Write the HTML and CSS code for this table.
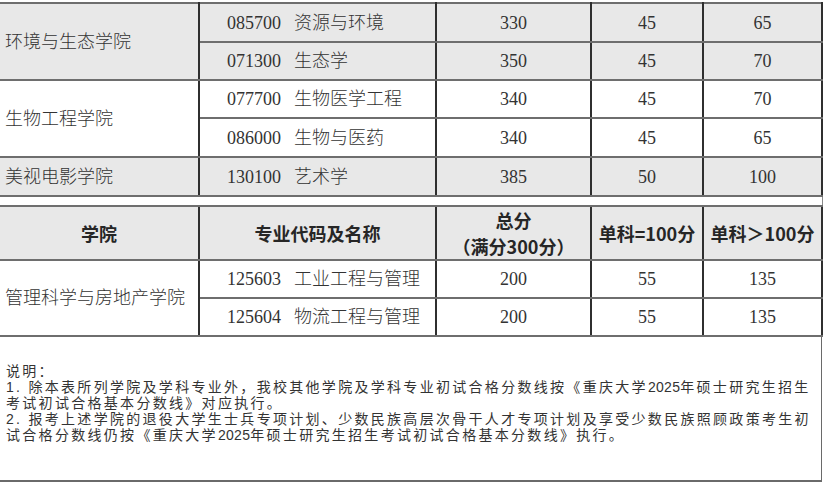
FILE: index.html
```html
<!DOCTYPE html>
<html lang="zh-CN">
<head>
<meta charset="utf-8">
<title>分数线</title>
<link rel="stylesheet" href="styles.css">
</head>
<body>
<div class="page">
  <table class="grid">
    <colgroup>
      <col class="c1"><col class="c2"><col class="c3"><col class="c4"><col class="c5">
    </colgroup>
    <tbody>
      <tr class="gray r39">
        <td rowspan="2" class="college">环境与生态学院</td>
        <td class="major"><span class="code">085700</span>资源与环境</td>
        <td>330</td><td>45</td><td>65</td>
      </tr>
      <tr class="gray r38">
        <td class="major"><span class="code">071300</span>生态学</td>
        <td>350</td><td>45</td><td>70</td>
      </tr>
      <tr class="r38">
        <td rowspan="2" class="college">生物工程学院</td>
        <td class="major"><span class="code">077700</span>生物医学工程</td>
        <td>340</td><td>45</td><td>70</td>
      </tr>
      <tr class="r39">
        <td class="major"><span class="code">086000</span>生物与医药</td>
        <td>340</td><td>45</td><td>65</td>
      </tr>
      <tr class="gray r39">
        <td class="college">美视电影学院</td>
        <td class="major"><span class="code">130100</span>艺术学</td>
        <td>385</td><td>50</td><td>100</td>
      </tr>
      <tr class="spacer">
        <td colspan="5"></td>
      </tr>
      <tr class="head">
        <th>学院</th>
        <th>专业代码及名称</th>
        <th>总分<br>（满分300分）</th>
        <th>单科=100分</th>
        <th>单科＞100分</th>
      </tr>
      <tr class="r38">
        <td rowspan="2" class="college">管理科学与房地产学院</td>
        <td class="major"><span class="code">125603</span>工业工程与管理</td>
        <td>200</td><td>55</td><td>135</td>
      </tr>
      <tr class="r38">
        <td class="major"><span class="code">125604</span>物流工程与管理</td>
        <td>200</td><td>55</td><td>135</td>
      </tr>
    </tbody>
  </table>
  <div class="notes">
    <div class="line">说明：</div>
    <div class="line">1. 除本表所列学院及学科专业外，我校其他学院及学科专业初试合格分数线按《重庆大学<span class="num">2025</span>年硕士研究生招生</div>
    <div class="line">考试初试合格基本分数线》对应执行。</div>
    <div class="line">2. 报考上述学院的退役大学生士兵专项计划、少数民族高层次骨干人才专项计划及享受少数民族照顾政策考生初</div>
    <div class="line">试合格分数线仍按《重庆大学<span class="num">2025</span>年硕士研究生招生考试初试合格基本分数线》执行。</div>
  </div>
</div>
</body>
</html>
```

FILE: styles.css
```css
html, body {
  margin: 0;
  padding: 0;
  background: #ffffff;
}

.page {
  width: 822px;
  padding-top: 2px;
}

.grid {
  width: 822px;
  border-collapse: collapse;
  table-layout: fixed;
  font-family: "Liberation Serif", "Noto Sans CJK SC", serif;
  font-size: 18px;
  color: #333333;
}

.c1 { width: 199px; }
.c2 { width: 237px; }
.c3 { width: 155px; }
.c4 { width: 112px; }
.c5 { width: 119px; }

.grid td,
.grid th {
  padding: 0;
  text-align: center;
  vertical-align: middle;
  border-top: 2px solid #6e6e6e;
  border-bottom: 2px solid #6e6e6e;
  border-left: 2px solid #2f2f2f;
  border-right: 2px solid #2f2f2f;
  line-height: 22px;
}

.grid td {
  font-weight: 300;
}

.grid tr > :first-child {
  border-left: none;
}

.grid td.college {
  text-align: left;
  padding-left: 5px;
}

.grid td.major {
  text-align: left;
  padding-left: 27px;
}

.code {
  margin-right: 13px;
}

.gray td {
  background: #e8e8e8;
}

.r39 { height: 39px; }
.r38 { height: 38px; }

.spacer td {
  height: 8px;
  background: #ffffff;
  border-left: none;
  border-right: 1px solid #8a8a8a;
}

.head { height: 49px; }

.head th {
  background: #e8e8e8;
  font-family: "Noto Sans CJK SC", sans-serif;
  font-weight: 700;
  color: #262626;
  line-height: 26px;
  font-size: 18px;
}

.notes {
  border-right: 1px solid #6a6a6a;
  border-bottom: 2px solid #6a6a6a;
  padding: 26px 0 37px 6px;
  font-family: "Liberation Sans", "Noto Sans CJK SC", sans-serif;
  font-size: 14px;
  line-height: 16px;
  letter-spacing: 2.3px;
  color: #333333;
}

.num {
  letter-spacing: 0.3px;
}

.line {
  white-space: nowrap;
  height: 16px;
}
```
